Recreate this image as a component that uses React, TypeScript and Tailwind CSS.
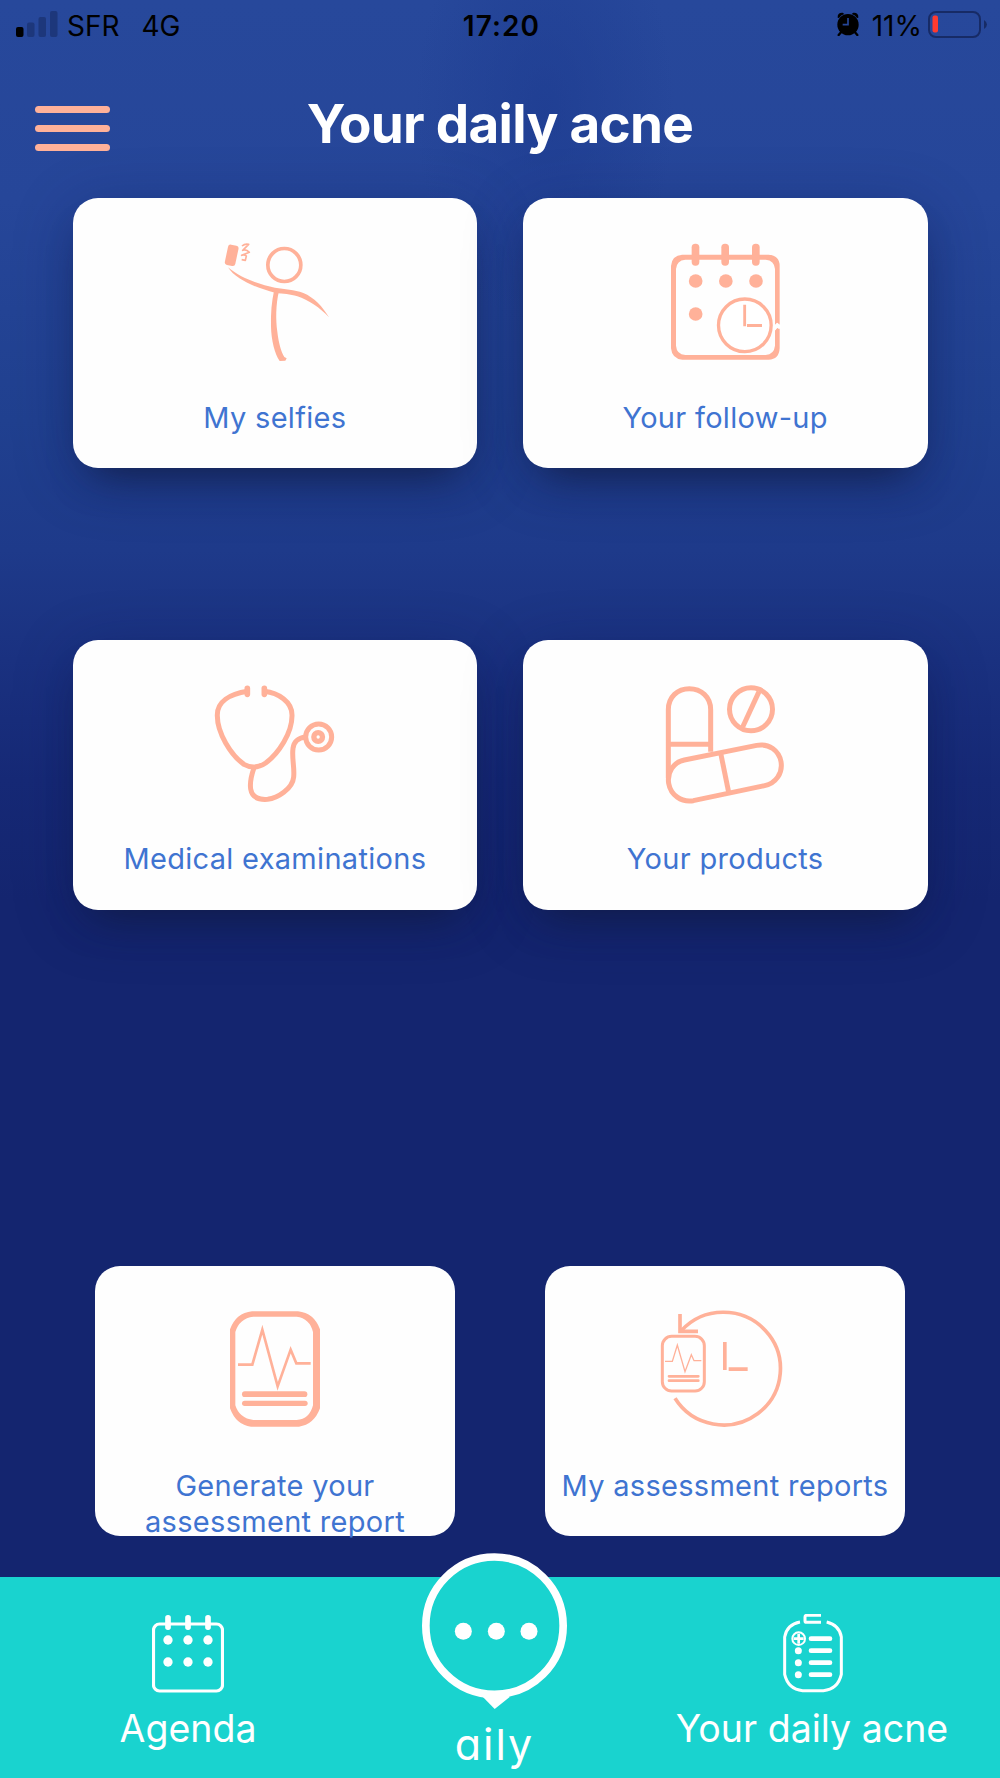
import type { ReactNode } from "react";

const PEACH = "#ffb199";

function SelfieIcon() {
  return (
    <svg viewBox="75 66 360 360" className="size-[120px] overflow-visible" fill={PEACH}>
      <rect x="109" y="75" width="32" height="62" rx="8" transform="rotate(12 125 106)" />
      <path
        d="M156 78Q165 70 176 73L158 91Q168 86 178 97L155 106Q163 102 169 108L166 121L155 119"
        fill="none"
        stroke={PEACH}
        strokeWidth="5"
        strokeLinejoin="round"
      />
      <circle cx="283" cy="135" r="49.500" fill="none" stroke={PEACH} strokeWidth="11" />
      <path d="M114 142C155 177 210 193 255 203C285 208 312 208 340 219C372 232 398 260 417 292C390 263 355 240 322 229C300 221 281 222 255 218C200 204 138 180 114 142Z" />
      <path d="M252 213L267 213C257 255 257 300 262 335C266 370 274 396 283 411L290 415L286 422L269 423C254 401 244 360 243 320C242 280 245 245 252 213Z" />
    </svg>
  );
}

function FollowUpIcon() {
  return (
    <svg viewBox="165 66 360 360" className="size-[120px] overflow-visible" fill={PEACH}>
      <path
        fillRule="evenodd"
        d="M217 104H476Q509 106 509 138V385Q507 419 476 419H217Q186 417 183 385V138Q185 106 217 104ZM226 119Q200 121 198 147V377Q200 403 226 405H467Q492 403 495 377V147Q493 121 467 119Z"
      />
      <path d="M490 318L502 308L514 318V325L502 331L514 325L502 324L490 335Z" fill="white" />
      <path d="M493 314L497 316L501 308L505 314L511 314V326L505 326L501 322L497 330L493 332Z" fill="white" />
      {[245, 334, 426].map((x) => (
        <rect key={x} x={x} y="71" width="23" height="66" rx="11" />
      ))}
      <circle cx="257" cy="183" r="20.500" />
      <circle cx="347.500" cy="183" r="20.500" />
      <circle cx="438" cy="183" r="20.500" />
      <circle cx="257" cy="282" r="20.500" />
      <circle cx="404.500" cy="316" r="79" fill="white" stroke={PEACH} strokeWidth="10" />
      <path d="M404 254V319M411 316.500H456" fill="none" stroke={PEACH} strokeWidth="8.500" />
    </svg>
  );
}

function StethoscopeIcon() {
  return (
    <svg
      viewBox="315 69 360 360"
      className="size-[120px] overflow-visible"
      fill="none"
      stroke={PEACH}
      strokeWidth="15"
    >
      <path d="M413 91C360 99 320 122 322 165C322 215 362 282 402 310Q434 328 467 306C505 278 547 216 546 162C546 122 505 96 463 91" />
      <path d="M412 82V100M463 82V100" strokeWidth="17" strokeLinecap="round" />
      <path d="M433 318C423 345 420 370 422 384C426 410 447 417 473 415C501 412 548 384 551 348C554 318 545 292 549 262C552 240 564 231 587 228" />
      <circle cx="626" cy="228" r="39" />
      <circle cx="624.500" cy="228" r="13" strokeWidth="16" />
    </svg>
  );
}

function ProductsIcon() {
  return (
    <svg
      viewBox="165 69 360 360"
      className="size-[120px] overflow-visible"
      fill="none"
      stroke={PEACH}
      strokeWidth="15"
    >
      <path d="M175 352V146C175 108 203 83 238 83S302 108 302 146V272M175 250H302" />
      <path d="M223 297L440 253C477 246 507 269 513 302C519 337 497 367 464 374L250 419C214 425 182 402 176 367C171 334 190 304 223 297Z" />
      <path d="M332 276L356 394" />
      <circle cx="423" cy="145" r="64.500" />
      <path d="M447 92L398 198" />
    </svg>
  );
}

function ReportIcon() {
  return (
    <svg viewBox="375 150 360 360" className="size-[120px] overflow-visible" fill={PEACH}>
      <path
        fillRule="evenodd"
        d="M486 154H624Q672 159 690 208V445Q672 494 627 500H483Q438 495 420 445V208Q438 159 486 154ZM490 170Q448 175 436 216V436Q448 475 490 480H620Q659 477 669 436V216Q659 175 620 170Z"
      />
      <path
        d="M444 314H487L517 209L563 379L602 269L619 310H662"
        fill="none"
        stroke={PEACH}
        strokeWidth="8"
      />
      <rect x="456" y="394" width="196" height="17" rx="8.500" />
      <rect x="456" y="422" width="197" height="16" rx="8" />
    </svg>
  );
}

function HistoryIcon() {
  return (
    <svg
      viewBox="375 150 360 360"
      className="size-[120px] overflow-visible"
      fill="none"
      stroke={PEACH}
    >
      <path d="M423 213A171 169 0 1 1 405 415" strokeWidth="11" />
      <path d="M420 162V214H474" strokeWidth="11" />
      <rect x="367" y="229" width="126" height="164" rx="28" strokeWidth="9" />
      <path d="M375 304H397L412 255L435 335L454 284L462 302H484" strokeWidth="4" />
      <path d="M387 349H475M387 362H475" strokeWidth="8" strokeLinecap="round" />
      <path d="M554.500 246V330M566 327.500H623" strokeWidth="11" />
    </svg>
  );
}

function AgendaIcon() {
  return (
    <svg viewBox="156 75 216 234" className="h-[78px] w-[72px]" fill="white">
      <rect x="160.500" y="102" width="207" height="201" rx="18" fill="none" stroke="white" strokeWidth="9.500" />
      {[204, 264, 324].map((x) => (
        <g key={x}>
          <rect x={x - 8.5} y="75" width="17" height="45" rx="8" />
          <circle cx={x} cy="150" r="14" />
          <circle cx={x} cy="216" r="14" />
        </g>
      ))}
    </svg>
  );
}

function ClipboardIcon() {
  return (
    <svg viewBox="369 72 180 237" className="ml-0.5 h-[79px] w-[60px]" fill="none" stroke="white">
      <path
        d="M420 96Q381 103 374 141V253Q384 297 428 302H490Q534 297 544 253V141Q538 105 500 96"
        strokeWidth="9"
      />
      <path d="M483 76H440Q435 76 435 81V92Q435 97 440 97H483" strokeWidth="9" />
      <circle cx="416" cy="146" r="19" strokeWidth="6" />
      <path d="M416 131V161M401 146H431" strokeWidth="8" />
      <path d="M453 146H510M453 182H510M453 218H510M453 254H510" strokeWidth="14" strokeLinecap="round" />
      <g fill="white" stroke="none">
        <circle cx="415" cy="182" r="10.500" />
        <circle cx="415" cy="218" r="10.500" />
        <circle cx="415" cy="254" r="10.500" />
      </g>
    </svg>
  );
}

function BubbleIcon() {
  return (
    <svg viewBox="66 37 435 468" className="h-[156px] w-[145px]">
      <path d="M248 468L284 505L330 468Z" fill="white" />
      <circle cx="283.500" cy="255" r="206" fill="#19d3cf" stroke="white" strokeWidth="23" />
      <g fill="white">
        <circle cx="190" cy="272" r="25.500" />
        <circle cx="289" cy="272" r="25.500" />
        <circle cx="387" cy="272" r="25.500" />
      </g>
    </svg>
  );
}

function StatusBar() {
  return (
    <div className="flex h-[50px] items-start text-[28px] leading-[34px] text-black">
      <div className="flex flex-1 items-start pl-4 pt-[9px]">
        <svg viewBox="0 0 42 26" className="mt-[2px] h-[26px] w-[42px]">
          <rect x="0" y="16" width="7.500" height="10" rx="2" />
          <g fill="#1d377b">
            <rect x="11" y="11.500" width="7.500" height="14.500" rx="2" />
            <rect x="22.500" y="6" width="7.500" height="20" rx="2" />
            <rect x="34" y="0" width="7.500" height="26" rx="2" />
          </g>
        </svg>
        <span className="ml-[9px]">SFR</span>
        <span className="ml-[22px]">4G</span>
      </div>
      <span className="pt-[9px] font-semibold tracking-[1.1px]">17:20</span>
      <div className="flex flex-1 items-start justify-end pr-[13px] pt-[9px]">
        <svg viewBox="0 0 66 72" className="mt-[3px] mr-[13px] h-6 w-[22px]">
          <circle cx="33" cy="38" r="32" />
          <path d="M2 17Q1 1 17 2L22 6Q11 9 6 18ZM64 17Q65 1 49 2L44 6Q55 9 60 18Z" />
          <path d="M12 61L5 69M54 61L61 69" stroke="black" strokeWidth="7" strokeLinecap="round" />
          <path d="M33 18V38H17" fill="none" stroke="#26479a" strokeWidth="5" />
        </svg>
        <span>11%</span>
        <svg viewBox="0 0 59 27" className="ml-[6px] mt-[2px] h-[27px] w-[59px]">
          <rect x="1" y="1" width="51" height="25" rx="7" fill="none" stroke="#172b66" strokeWidth="2" />
          <rect x="4.500" y="4.500" width="5.500" height="17" rx="2" fill="#ff3b30" />
          <path d="M56 9Q59 11 59 13.500T56 18Z" fill="#172b66" />
        </svg>
      </div>
    </div>
  );
}

function Card({ icon, label, shadow }: { icon: ReactNode; label: string; shadow?: boolean }) {
  return (
    <button
      className={`flex h-[270px] flex-1 flex-col items-center justify-start rounded-[25px] bg-[#fefefe] pt-11 ${
        shadow
          ? "shadow-[0_24px_40px_-22px_rgba(18,28,64,0.9),0_12px_60px_0_rgba(12,24,80,0.3)]"
          : ""
      }`}
    >
      {icon}
      <span className="mt-[37.500px] max-w-[345px] text-center text-[29px] leading-9 tracking-[0.3px] text-[#3f74d1]">
        {label}
      </span>
    </button>
  );
}

export default function App() {
  return (
    <div className="flex h-[1778px] w-[1000px] flex-col overflow-hidden bg-[radial-gradient(ellipse_130px_220px_at_545px_110px,rgba(28,58,143,0.6),transparent),linear-gradient(180deg,#27489b_0px,#264699_200px,#20408f_420px,#1e3a8a_550px,#1a3180_660px,#162976_780px,#14256f_900px,#14256f_1778px)] font-['Inter',sans-serif]">
      <StatusBar />

      <header className="flex h-[148px] items-start px-[34.500px]">
        <button className="mt-14 flex w-[75px] flex-col gap-3">
          <span className="h-[7px] rounded-full bg-[#ffb199]" />
          <span className="h-[7px] rounded-full bg-[#ffb199]" />
          <span className="h-[7px] rounded-full bg-[#ffb199]" />
        </button>
        <h1 className="mr-[75px] mt-[42px] flex-1 text-center text-[53px] leading-[64px] font-bold tracking-[-0.7px] text-white">
          Your daily acne
        </h1>
      </header>

      <main className="flex flex-1 flex-col">
        <div className="flex gap-[45.500px] px-[72.500px]">
          <Card shadow icon={<SelfieIcon />} label="My selfies" />
          <Card shadow icon={<FollowUpIcon />} label="Your follow-up" />
        </div>
        <div className="mt-[171.500px] flex gap-[45.500px] px-[72.500px]">
          <Card shadow icon={<StethoscopeIcon />} label="Medical examinations" />
          <Card shadow icon={<ProductsIcon />} label="Your products" />
        </div>
        <div className="mt-[356.500px] flex gap-[90px] px-[95px]">
          <Card icon={<ReportIcon />} label="Generate your assessment report" />
          <Card icon={<HistoryIcon />} label="My assessment reports" />
        </div>
      </main>

      <nav className="flex h-[201px] bg-[#19d3cf] text-[37.5px] leading-[46px] text-white">
        <button className="flex w-[376px] flex-col items-center pt-[38px]">
          <AgendaIcon />
          <span className="mt-[13px]">Agenda</span>
        </button>
        <button className="-mt-6 flex flex-1 flex-col items-center pr-[11px]">
          <BubbleIcon />
          <span className="mt-[10px] text-[43px] leading-[50px] tracking-[2px] [font-feature-settings:'cv11']">
            aily
          </span>
        </button>
        <button className="flex w-[376px] flex-col items-center pt-[37px]">
          <ClipboardIcon />
          <span className="mt-[13px]">Your daily acne</span>
        </button>
      </nav>
    </div>
  );
}
